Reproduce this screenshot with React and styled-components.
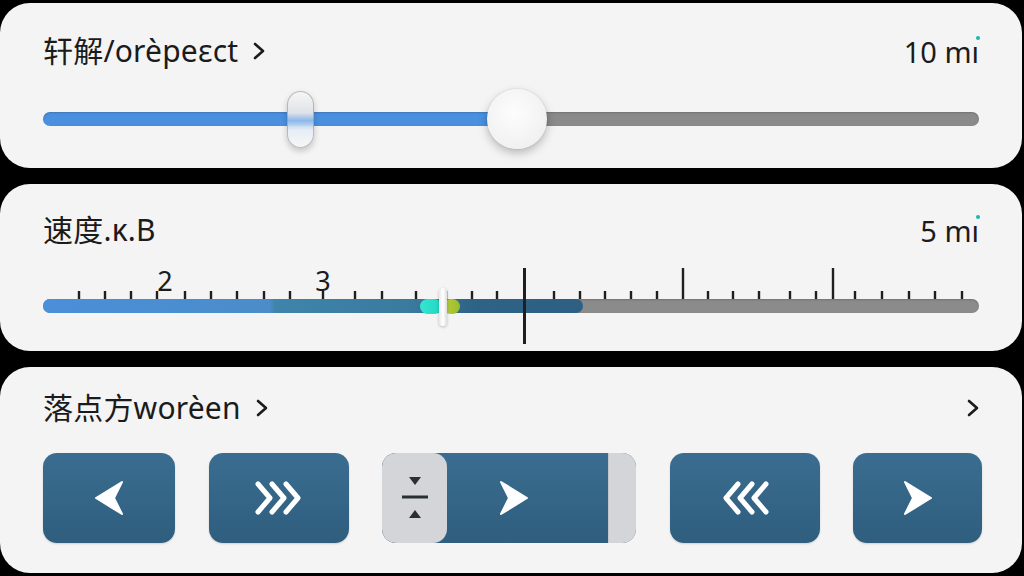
import React from 'react'
import styled, { createGlobalStyle } from 'styled-components'

const GlobalStyle = createGlobalStyle`
	html, body {
		margin: 0;
		padding: 0;
		background: #000;
	}
	body {
		font-family: "Noto Sans", "Noto Sans CJK SC", sans-serif;
		color: #1b1b1b;
	}
`

const Page = styled.div`
	width: 1024px;
	height: 576px;
	box-sizing: border-box;
	padding: 3px 2px 0 0;
	display: flex;
	flex-direction: column;
	gap: 16px;
	overflow: hidden;
`

const Card = styled.section`
	background: #f4f4f4;
	border-radius: 30px;
	padding: ${p => p.$pad};
	display: flex;
	flex-direction: column;
	gap: ${p => p.$gap}px;
`

const Header = styled.div`
	height: 40px;
	display: flex;
	align-items: center;
	justify-content: space-between;
`

const Title = styled.div`
	display: flex;
	align-items: center;
	gap: 15px;
	font-size: 30px;
	letter-spacing: 0.2px;
	line-height: 1;
`

const Unit = styled.div`
	position: relative;
	font-size: 29px;
	line-height: 1;
	padding-right: 0;
	&::after {
		content: '';
		position: absolute;
		right: -1px;
		top: -1px;
		width: 4px;
		height: 4px;
		border-radius: 50%;
		background: #1bb6b0;
	}
`

const SliderRow = styled.div`
	position: relative;
	height: 60px;
	display: flex;
	align-items: center;
`

const Track = styled.div`
	width: 100%;
	height: 14px;
	border-radius: 7px;
	background: ${p => p.$bg};
	box-shadow: inset 0 1px 2px rgba(0, 0, 0, 0.18);
	display: flex;
`

const Fill = styled.div`
	height: 100%;
	border-radius: 7px;
	background: linear-gradient(
		to right,
		#4a8fd9 0%,
		#4b8cc9 42%,
		#3f84aa 43%,
		#3a7a9f 68%,
		#2e6385 80%,
		#2d6083 100%
	);
`

const GlassThumb = styled.div`
	position: absolute;
	left: 244px;
	top: 2px;
	width: 27px;
	height: 57px;
	box-sizing: border-box;
	border-radius: 14px;
	border: 1.5px solid rgba(140, 140, 140, 0.55);
	background: linear-gradient(
		to bottom,
		#f6f6f6 0%,
		#dfe2e6 38%,
		rgba(150, 190, 235, 0.85) 52%,
		#e8eef5 70%,
		#f6f6f6 100%
	);
	box-shadow: 0 3px 6px rgba(0, 0, 0, 0.2);
`

const Knob = styled.div`
	position: absolute;
	left: 444px;
	top: 0;
	width: 60px;
	height: 60px;
	border-radius: 50%;
	background: radial-gradient(circle at 45% 40%, #fdfdfd, #f1f1f1 70%, #e6e6e6);
	box-shadow: 0 4px 10px rgba(0, 0, 0, 0.25), 0 0 2px rgba(0, 0, 0, 0.15);
`

const Ruler = styled.div`
	position: relative;
	display: flex;
	flex-direction: column;
	padding-bottom: 32px;
`

const Scale = styled.svg`
	display: block;
	width: 936px;
	height: 36px;
	overflow: visible;
`

const Marker = styled.div`
	position: absolute;
	left: 480px;
	top: 5px;
	width: 2.5px;
	height: 76px;
	background: #1f1f1f;
`

const Blob = styled.div`
	position: absolute;
	top: 36px;
	left: ${p => p.$left}px;
	width: ${p => p.$w}px;
	height: 15px;
	border-radius: 8px;
	background: ${p => p.$color};
`

const Pin = styled.div`
	position: absolute;
	left: 396px;
	top: 25px;
	width: 8px;
	height: 38px;
	border-radius: 4px;
	background: linear-gradient(to right, #e9e9e9, #ffffff 50%, #dedede);
	box-shadow: 0 1px 3px rgba(0, 0, 0, 0.25);
`

const ButtonRow = styled.div`
	display: flex;
	gap: 33.5px;
	height: 90px;
	margin-right: -3px;
`

const NavButton = styled.button`
	flex-shrink: 0;
	width: ${p => p.$w}px;
	height: 90px;
	border: 0;
	padding: 0;
	border-radius: 14px;
	background: linear-gradient(to bottom, #3a6d90, #2f5e7e);
	display: flex;
	align-items: center;
	justify-content: center;
	box-shadow: 0 1px 2px rgba(0, 0, 0, 0.15);
`

const Segment = styled.div`
	flex-shrink: 0;
	width: 254px;
	height: 90px;
	border-radius: 14px;
	overflow: hidden;
	background: linear-gradient(to bottom, #3a6d90, #2f5e7e);
	display: flex;
`

const SegSide = styled.div`
	width: 65px;
	border-radius: 14px;
	background: #d3d5d8;
	display: flex;
	align-items: center;
	justify-content: center;
`

const SegMain = styled.div`
	flex: 1;
	display: flex;
	align-items: center;
	justify-content: center;
	padding-right: 28px;
`

const SegEnd = styled.div`
	width: 27px;
	background: #d3d5d8;
	border-left: 1px solid #c4c7cb;
`

const Flip = styled.svg`
	display: block;
	transform: ${p => (p.$flip ? 'scaleX(-1)' : 'none')};
`

const Chevron = () => (
	<svg width="12" height="18" viewBox="0 0 12 18">
		<polyline points="2,2 10,9 2,16" fill="none" stroke="#1b1b1b" strokeWidth="2.6" strokeLinecap="round" strokeLinejoin="round" />
	</svg>
)

const ArrowHead = ({ flip }) => (
	<Flip $flip={flip} width="32" height="40" viewBox="0 0 32 40">
		<path d="M3 20 L29 4 L21 20 L29 36 Z" fill="#fff" stroke="#fff" strokeWidth="2" strokeLinejoin="round" />
	</Flip>
)

const TripleChevron = ({ flip }) => (
	<Flip $flip={flip} width="50" height="36" viewBox="0 0 50 36">
		{[4, 18, 32].map(x => (
			<polyline
				key={x}
				points={`${x},4 ${x + 12},18 ${x},32`}
				fill="none"
				stroke="#fff"
				strokeWidth="5"
				strokeLinecap="round"
				strokeLinejoin="round"
			/>
		))}
	</Flip>
)

const CollapseIcon = () => (
	<svg width="26" height="44" viewBox="0 0 26 44">
		<polygon points="7,1 19,1 13,9" fill="#2a2f33" />
		<rect x="0" y="19.5" width="26" height="3" fill="#2a2f33" />
		<polygon points="13,34 19,42 7,42" fill="#2a2f33" />
	</svg>
)

// tick positions measured from the left end of the track
const ticks = [36, 62, 88, 114, 142, 168, 194, 221, 247, 280, 312, 339, 373, 403, 429, 454, 511, 537, 562, 588, 614, 640, 665, 690, 716, 747, 773, 790, 812, 839, 866, 892, 919]
const tallTicks = [640, 790]

const TickScale = () => (
	<Scale viewBox="0 0 936 36">
		{ticks.map(x => {
			const tall = tallTicks.includes(x)
			return <rect key={x} x={x - 1.2} y={tall ? 5 : 28} width="2.4" height={tall ? 31 : 8} fill="#1f1f1f" />
		})}
		<text x="122" y="28" fontSize="27" textAnchor="middle" fill="#1b1b1b" fontFamily="Noto Sans, sans-serif">2</text>
		<text x="280" y="28" fontSize="27" textAnchor="middle" fill="#1b1b1b" fontFamily="Noto Sans, sans-serif">3</text>
	</Scale>
)

const App = () => {
	const rangeFill = 50.6
	const speedFill = 57.7
	return (
		<>
			<GlobalStyle />
			<Page>
				<Card $pad="28px 43px 19px 43px" $gap={18}>
					<Header>
						<Title>
							轩解/orèpeɛct
							<Chevron />
						</Title>
						<Unit>10 mı</Unit>
					</Header>
					<SliderRow>
						<Track $bg={`linear-gradient(to right, #4a90df 0 ${rangeFill}%, #8a8a8a ${rangeFill}%)`} />
						<GlassThumb />
						<Knob />
					</SliderRow>
				</Card>

				<Card $pad="26px 43px 6px 43px" $gap={13}>
					<Header>
						<Title>速度.ĸ.B</Title>
						<Unit>5 mı</Unit>
					</Header>
					<Ruler>
						<TickScale />
						<Track $bg="#8b8b8b">
							<Fill style={{ width: `${speedFill}%` }} />
						</Track>
						<Marker />
						<Blob $left={377} $w={22} $color="linear-gradient(to right, #35e6cf, #22d6c4)" />
						<Blob $left={400} $w={17} $color="linear-gradient(to right, #b8cf3a, #9cbc2c)" />
						<Pin />
					</Ruler>
				</Card>

				<Card $pad="21px 43px 30px 43px" $gap={25}>
					<Header>
						<Title>
							落点方worèen
							<Chevron />
						</Title>
						<Chevron />
					</Header>
					<ButtonRow>
						<NavButton $w={132}>
							<ArrowHead />
						</NavButton>
						<NavButton $w={140}>
							<TripleChevron />
						</NavButton>
						<Segment>
							<SegSide>
								<CollapseIcon />
							</SegSide>
							<SegMain>
								<ArrowHead flip />
							</SegMain>
							<SegEnd />
						</Segment>
						<NavButton $w={150}>
							<TripleChevron flip />
						</NavButton>
						<NavButton $w={129}>
							<ArrowHead flip />
						</NavButton>
					</ButtonRow>
				</Card>
			</Page>
		</>
	)
}

export default App
